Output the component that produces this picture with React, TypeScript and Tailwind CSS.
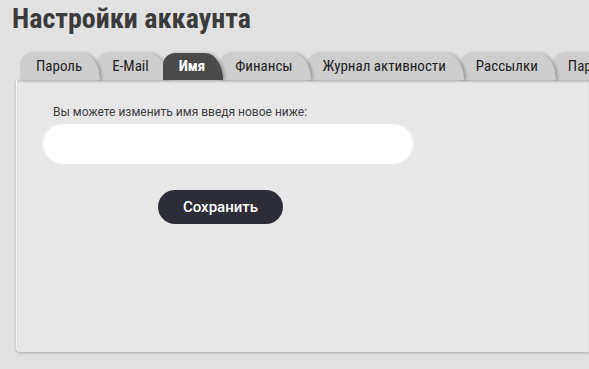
import React from "react";

const tabs = ["Пароль", "E-Mail", "Имя", "Финансы", "Журнал активности", "Рассылки", "Пароль 2"];

export default function App() {
  return (
    <div className="w-[589px] h-[369px] overflow-hidden bg-[#e1e1e1]" style={{ fontFamily: "Roboto, 'Liberation Sans', sans-serif" }}>
      <h1
        className="pl-[12px] pt-[2px] h-[53px] text-[28px] font-bold text-[#3b3b3b] leading-[34px]"
        style={{ fontFamily: "'Roboto Condensed', 'Liberation Sans Narrow', 'DejaVu Sans Condensed', sans-serif" }}
      >
        Настройки аккаунта
      </h1>
      <div className="pl-[20px] flex whitespace-nowrap relative z-10">
        {tabs.map((t, i) => {
          const active = t === "Имя";
          return (
            <div
              key={t}
              className={
                "h-[27px] flex items-center pl-[16px] pr-[18px] rounded-tl-[12px] rounded-tr-[18px_27px] text-[15px] shrink-0 " +
                (i > 0 ? "-ml-[4px] " : "") +
                (active
                  ? "bg-[#4a4a4a] text-white font-bold shadow-[2px_0_3px_rgba(0,0,0,0.25)]"
                  : "bg-[#cdcdcd] text-[#1e1e1e] shadow-[2px_0_3px_rgba(0,0,0,0.25)]")
              }
              style={{
                zIndex: active ? 20 : 10 - i,
                fontFamily: "'Roboto Condensed', 'Liberation Sans Narrow', 'DejaVu Sans Condensed', sans-serif",
              }}
            >
              {t === "Пароль 2" ? "Пароль" : t}
            </div>
          );
        })}
      </div>
      <div className="ml-[16px] h-[272px] bg-[#e7e7e7] rounded-bl-[4px] border-l border-[#f3f3f3] shadow-[0_1px_3px_rgba(0,0,0,0.25),inset_0_2px_2px_rgba(0,0,0,0.12)] pt-[24px] pl-[26px]">
        <div className="text-[12px] text-[#3d3d3d] pl-[10px] leading-[16px]">Вы можете изменить имя введя новое ниже:</div>
        <input className="mt-[4px] block w-[370px] h-[40px] rounded-full bg-white outline-none px-4" />
        <button className="mt-[26px] ml-[115px] w-[125px] h-[34px] rounded-full bg-[#2d2d38] text-white text-[15px] font-medium">
          Сохранить
        </button>
      </div>
    </div>
  );
}
